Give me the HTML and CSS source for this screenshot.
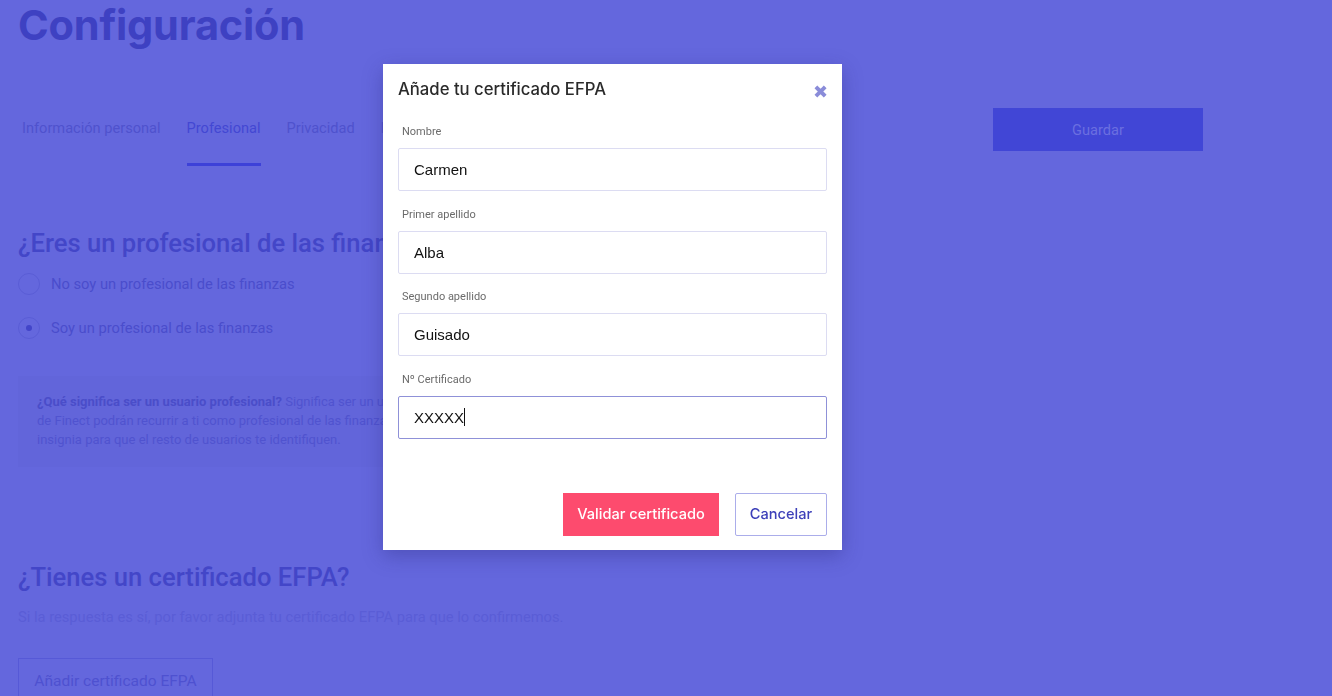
FILE: index.html
```html
<!DOCTYPE html>
<html lang="es">
<head>
<meta charset="utf-8">
<title>Configuración</title>
<link rel="stylesheet" href="styles.css">
</head>
<body>
<div class="page">
  <h1 class="title">Configuración</h1>
  <div class="toolbar">
    <nav class="tabs">
      <a class="tab">Información personal</a>
      <a class="tab active">Profesional</a>
      <a class="tab">Privacidad</a>
      <a class="tab">Notificaciones</a>
    </nav>
    <button class="save">Guardar</button>
  </div>

  <section class="section">
    <h2 class="h2">¿Eres un profesional de las finanzas?</h2>
    <label class="radio"><span class="circle"></span>No soy un profesional de las finanzas</label>
    <label class="radio"><span class="circle checked"></span>Soy un profesional de las finanzas</label>
    <div class="info">
      <b>¿Qué significa ser un usuario profesional?</b> Significa ser un usuario verificado por Finect. Los usuarios<br>
      de Finect podrán recurrir a ti como profesional de las finanzas y en tu perfil aparecerá una<br>
      insignia para que el resto de usuarios te identifiquen.
    </div>
  </section>

  <section class="section efpa">
    <h2 class="h2">¿Tienes un certificado EFPA?</h2>
    <p class="sub">Si la respuesta es sí, por favor adjunta tu certificado EFPA para que lo confirmemos.</p>
    <button class="outline">Añadir certificado EFPA</button>
  </section>
</div>

<div class="modal">
  <div class="modal-head">
    <h3 class="modal-title">Añade tu certificado EFPA</h3>
    <span class="close">&#10006;</span>
  </div>
  <div class="field">
    <label class="label">Nombre</label>
    <div class="input">Carmen</div>
  </div>
  <div class="field">
    <label class="label">Primer apellido</label>
    <div class="input">Alba</div>
  </div>
  <div class="field">
    <label class="label">Segundo apellido</label>
    <div class="input">Guisado</div>
  </div>
  <div class="field">
    <label class="label">Nº Certificado</label>
    <div class="input focus">XXXXX<span class="caret"></span></div>
  </div>
  <div class="actions">
    <button class="btn-primary">Validar certificado</button>
    <button class="btn-cancel">Cancelar</button>
  </div>
</div>
</body>
</html>
```
FILE: styles.css
```css
html, body {
  margin: 0;
  height: 100%;
}
body {
  background: #6467dd;
  font-family: Roboto, "Liberation Sans", sans-serif;
  overflow: hidden;
}
.page {
  padding: 0 18px;
  width: 1185px;
}
.title {
  margin: 0;
  padding-top: 1px;
  font-family: Inter, sans-serif;
  font-weight: 700;
  font-size: 41.5px;
  line-height: 48px;
  letter-spacing: -0.2px;
  color: #3e41c2;
}
.toolbar {
  display: flex;
  justify-content: space-between;
  align-items: flex-start;
  margin-top: 69px;
}
.tabs {
  display: flex;
  gap: 26px;
  padding-left: 4px;
}
.tab {
  font-size: 14.6px;
  line-height: 20px;
  color: #4f52cd;
  padding-bottom: 25px;
  border-bottom: 3px solid transparent;
}
.tab.active {
  color: #4347d3;
  border-bottom-color: #3d41d8;
}
.save {
  width: 210px;
  height: 43px;
  margin-top: -10px;
  border: 0;
  background: #4146d6;
  color: #6b6fe0;
  font-family: Roboto, sans-serif;
  font-size: 14.6px;
}
.section {
  margin-top: 61px;
}
.h2 {
  margin: 0;
  font-size: 25.6px;
  font-weight: 500;
  line-height: 32px;
  color: #4346c8;
}
.radio {
  display: flex;
  align-items: center;
  gap: 11px;
  height: 22px;
  margin-top: 14px;
  font-size: 14.7px;
  color: #4a4dcc;
}
.radio + .radio {
  margin-top: 22px;
}
.circle {
  width: 20px;
  height: 20px;
  border: 1px solid #5a5dd6;
  border-radius: 50%;
  display: flex;
  align-items: center;
  justify-content: center;
}
.circle.checked::after {
  content: "";
  width: 6px;
  height: 6px;
  border-radius: 50%;
  background: #4245c9;
}
.info {
  margin-top: 37px;
  padding: 16px 19px 18px;
  background: #6265da;
  font-size: 13px;
  line-height: 19px;
  color: #5053cf;
  white-space: nowrap;
  overflow: hidden;
  width: 560px;
}
.info b {
  color: #4a4dc9;
}
.efpa {
  margin-top: 94px;
}
.sub {
  margin: 15px 0 0;
  font-size: 14.7px;
  color: #5a5dd6;
}
.outline {
  margin-top: 32px;
  width: 195px;
  height: 46px;
  background: transparent;
  border: 1px solid #5659d7;
  color: #4e51d0;
  font-family: Roboto, sans-serif;
  font-size: 15.5px;
}

.modal {
  position: fixed;
  left: 383px;
  top: 64px;
  width: 459px;
  height: 486px;
  box-sizing: border-box;
  padding: 0 15px;
  background: #fff;
  box-shadow: 0 6px 18px rgba(40, 40, 120, 0.35);
  font-family: "Liberation Sans", Arial, sans-serif;
}
.modal-head {
  display: flex;
  justify-content: space-between;
  align-items: center;
  height: 50px;
}
.modal-title {
  margin: 0;
  font-family: Inter, sans-serif;
  font-weight: 500;
  font-size: 16.7px;
  color: #2a2a2a;
}
.close {
  color: #8a8cd9;
  font-size: 18px;
  line-height: 18px;
  margin-top: 6px;
  margin-right: -1px;
}
.field {
  margin-top: 11px;
}
.field + .field {
  margin-top: 16.5px;
}
.label {
  display: block;
  padding-left: 4px;
  font-family: Roboto, sans-serif;
  font-size: 11px;
  line-height: 14px;
  color: #6b6b6b;
}
.input {
  margin-top: 9px;
  height: 43px;
  box-sizing: border-box;
  border: 1px solid #dcdcf2;
  border-radius: 2px;
  display: flex;
  align-items: center;
  padding-left: 15px;
  font-size: 15px;
  color: #111;
}
.input.focus {
  border-color: #8f91d8;
}
.caret {
  display: inline-block;
  width: 1px;
  height: 18px;
  background: #111;
}
.actions {
  display: flex;
  justify-content: flex-end;
  gap: 16px;
  margin-top: 54px;
}
.btn-primary {
  width: 156px;
  height: 43px;
  border: 0;
  background: #fd4b6e;
  color: #fff;
  font-family: Inter, sans-serif;
  font-weight: 500;
  font-size: 14.6px;
}
.btn-cancel {
  width: 92px;
  height: 43px;
  background: #fff;
  border: 1px solid #abadea;
  border-radius: 2px;
  color: #3d40b9;
  font-family: Inter, sans-serif;
  font-weight: 500;
  font-size: 14.6px;
}
```
